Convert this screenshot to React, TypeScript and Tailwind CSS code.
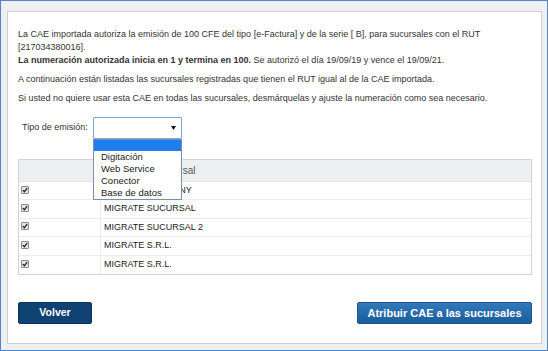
import React from 'react';

const rows = [
  'MIGRATE COMPANY',
  'MIGRATE SUCURSAL',
  'MIGRATE SUCURSAL 2',
  'MIGRATE S.R.L.',
  'MIGRATE S.R.L.',
];

const options = ['Digitación', 'Web Service', 'Conector', 'Base de datos'];

const CheckMark = () => (
  <span className="flex h-[8px] w-[8px] items-center justify-center rounded-[1px] border border-[#8a8a8a] bg-[#e4e4e4]">
    <svg width="6" height="6" viewBox="0 0 6 6">
      <path d="M0.8 3.1 L2.4 4.7 L5.2 1.2" fill="none" stroke="#222" strokeWidth="1.3" />
    </svg>
  </span>
);

export default function App() {
  return (
    <div
      className="h-[351px] w-[548px] border border-[#4f86c6] bg-[#efefef] pt-[10px] pl-[6px] pr-[5px] pb-[6px] text-[#333]"
      style={{ fontFamily: '"Liberation Sans", Arial, sans-serif' }}
    >
      <div className="flex h-full flex-col border border-[#cfcfcf] bg-white pt-[16px] pr-[9px] pb-[19px] pl-[10px]">
        <div className="text-[9px] leading-[13px]">
          <p className="mb-[6px]">
            La CAE importada autoriza la emisión de 100 CFE del tipo [e-Factura] y de la serie [ B], para sucursales con el RUT
            <br />
            [217034380016].
            <br />
            <b>La numeración autorizada inicia en 1 y termina en 100.</b> Se autorizó el día 19/09/19 y vence el 19/09/21.
          </p>
          <p className="mb-[6px]">
            A continuación están listadas las sucursales registradas que tienen el RUT igual al de la CAE importada.
          </p>
          <p>
            Si usted no quiere usar esta CAE en todas las sucursales, desmárquelas y ajuste la numeración como sea necesario.
          </p>
        </div>

        <div className="mt-[12px] flex items-center pl-[4px]">
          <span className="w-[71px] text-[9px]">Tipo de emisión:</span>
          <div className="relative">
            <div className="flex h-[22px] w-[89px] items-center justify-end rounded-[1px] border border-[#7ea7d6] bg-white pr-[5px]">
              <svg width="5" height="4" viewBox="0 0 5 4">
                <path d="M0 0 H5 L2.5 4 Z" fill="#111" />
              </svg>
            </div>
            <div className="absolute top-[22px] left-0 z-10 w-[89px] border border-[#7c8fa8] bg-white text-[9.5px] leading-[12px]">
              <div className="h-[11px] bg-[#1e7ef0]" />
              {options.map((o) => (
                <div key={o} className="h-[12px] pl-[7px] text-[#222]">
                  {o}
                </div>
              ))}
            </div>
          </div>
        </div>

        <div className="mt-[20px] border border-[#d3d3d3] text-[9px]">
          <div className="flex h-[22px] items-center border-b border-[#e6e6e6] bg-[#eeeff1]">
            <div className="w-[82px]" />
            <div className="pl-[5px] text-[10px] text-[#555]">Nombre de sucursal</div>
          </div>
          {rows.map((r, i) => (
            <div
              key={i}
              className={`flex h-[18.4px] items-stretch ${i < rows.length - 1 ? 'border-b border-[#ececec]' : ''}`}
            >
              <div className="flex w-[82px] items-center border-r border-[#ececec] pl-[2px] pb-[2px]">
                <CheckMark />
              </div>
              <div className="flex items-center pl-[3px] text-[9px] text-[#222]">{r}</div>
            </div>
          ))}
        </div>

        <div className="mt-auto flex justify-between">
          <button className="h-[22px] w-[74px] rounded-[2px] border border-[#0b345e] bg-[#0f4272] text-[10.5px] font-bold text-white">
            Volver
          </button>
          <button className="h-[22px] w-[175px] rounded-[2px] border border-[#1a5590] bg-gradient-to-b from-[#3179bb] to-[#1c5d9a] text-[11px] font-bold text-white">
            Atribuir CAE a las sucursales
          </button>
        </div>
      </div>
    </div>
  );
}
